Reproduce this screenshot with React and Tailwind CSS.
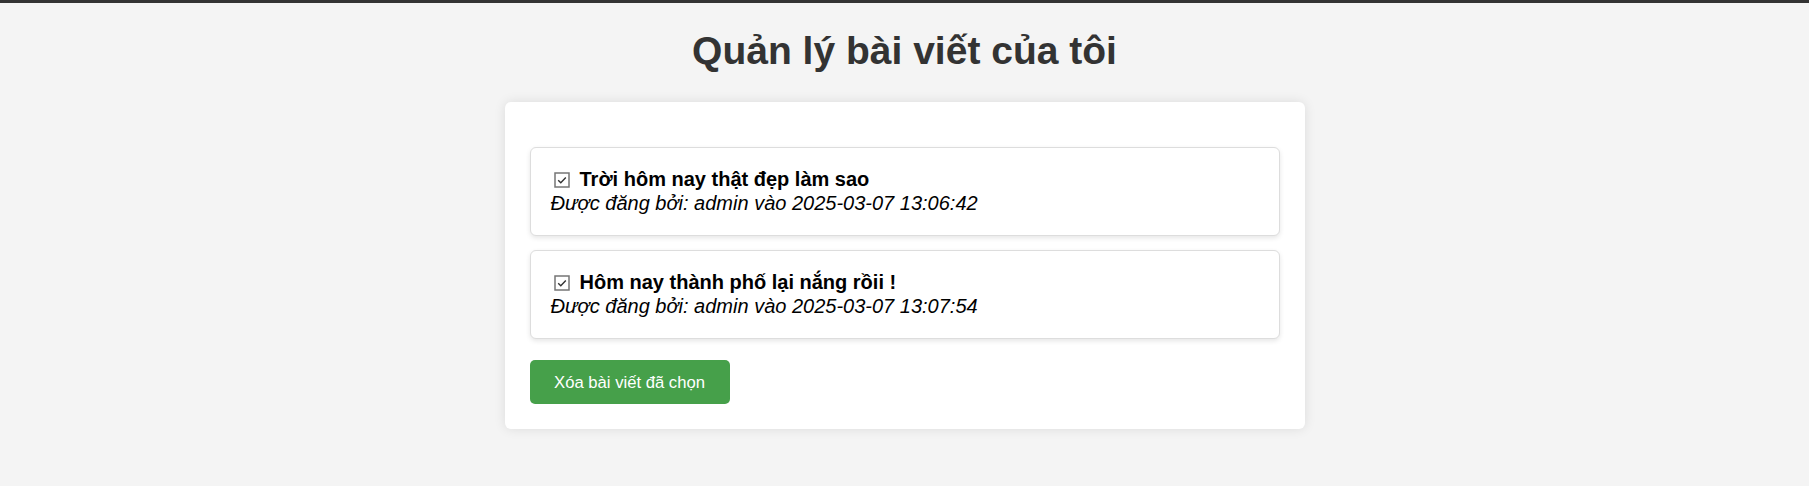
const posts = [
  { title: "Trời hôm nay thật đẹp làm sao", author: "admin", time: "2025-03-07 13:06:42" },
  { title: "Hôm nay thành phố lại nắng rồii !", author: "admin", time: "2025-03-07 13:07:54" },
];

const CheckIcon = () => (
  <svg width="16" height="16" viewBox="0 0 16 16" className="ml-[3px] mr-[10px] shrink-0">
    <rect x="1" y="1" width="14" height="14" fill="#fff" stroke="#767676" strokeWidth="1.5" />
    <path d="M4.2 8.2 L6.8 10.8 L11.8 5.4" fill="none" stroke="#333" strokeWidth="1.4" />
  </svg>
);

export default function App() {
  return (
    <div className="min-h-screen bg-[#f4f4f4] font-['Liberation_Sans',Arial,sans-serif]">
      <div className="h-[3px] bg-[#333]" />
      <h1 className="mt-[25px] text-center text-[39px] leading-[46px] font-bold text-[#333]">
        Quản lý bài viết của tôi
      </h1>
      <div className="mx-auto mt-[28px] w-[800px] rounded-[6px] bg-white px-[25px] pt-[45px] pb-[25px] shadow-[0_0_12px_rgba(0,0,0,0.1)]">
        <div className="flex flex-col gap-[14px]">
          {posts.map((p) => (
            <div
              key={p.time}
              className="rounded-[6px] border border-[#ddd] bg-white p-[20px] text-[20px] leading-[23.5px] text-black shadow-[0_2px_5px_rgba(0,0,0,0.1)]"
            >
              <div className="flex items-center">
                <CheckIcon />
                <span className="font-bold">{p.title}</span>
              </div>
              <div className="italic">
                Được đăng bởi: {p.author} vào {p.time}
              </div>
            </div>
          ))}
        </div>
        <button className="mt-[21px] h-[44px] w-[200px] rounded-[5px] bg-[#46a04a] text-[16.67px] text-white">
          Xóa bài viết đã chọn
        </button>
      </div>
    </div>
  );
}
